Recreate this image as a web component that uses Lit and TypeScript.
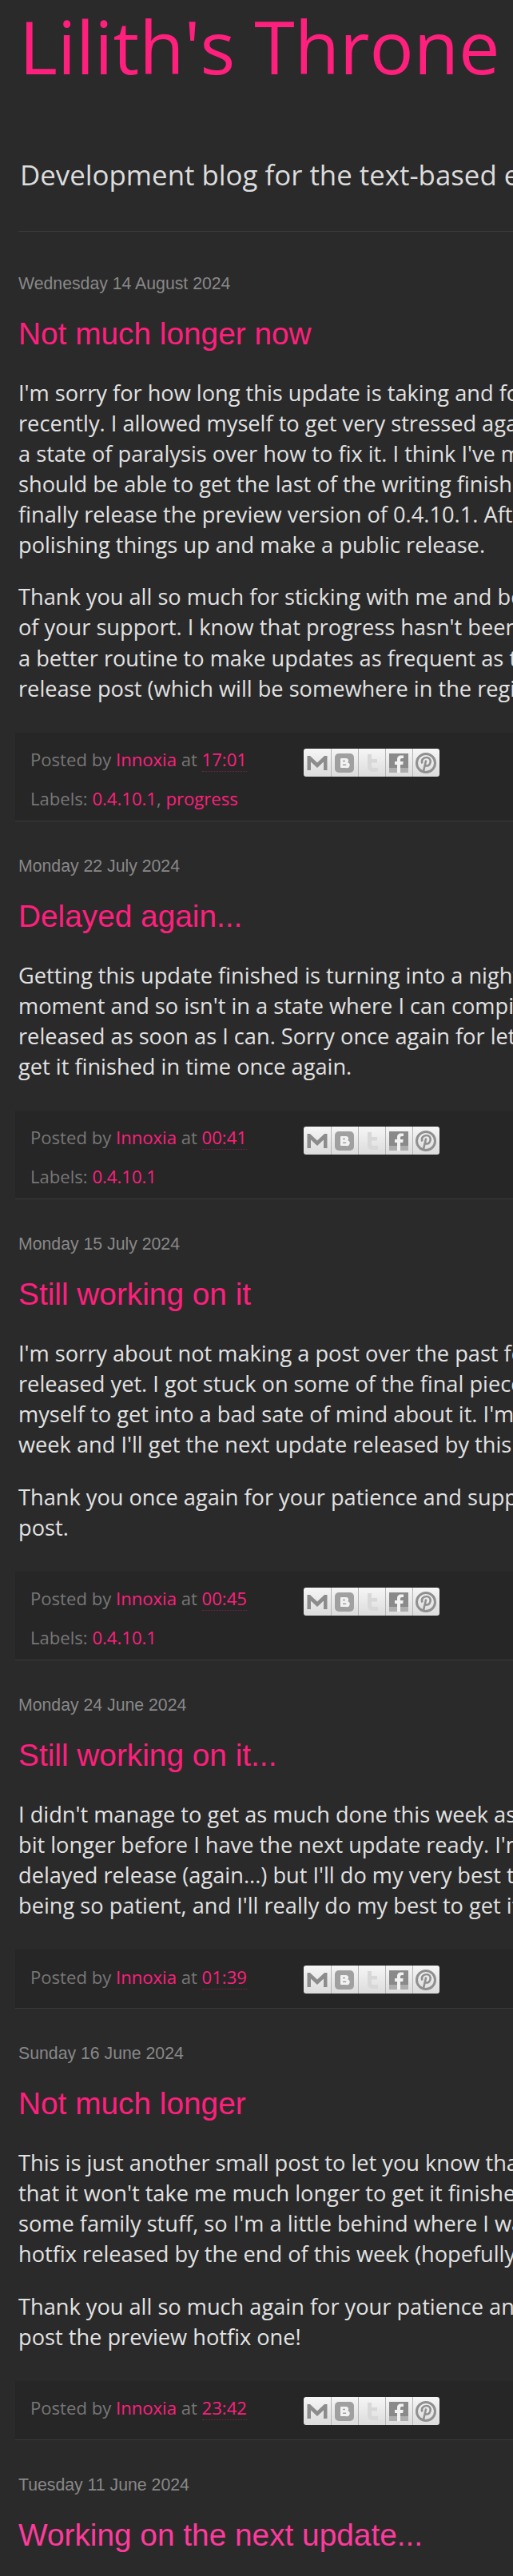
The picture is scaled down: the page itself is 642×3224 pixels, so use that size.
import { LitElement, html, css, svg } from "lit";
import { customElement } from "lit/decorators.js";

interface Post {
  date: string;
  title: string;
  paras: string[][];
  time: string;
  labels?: string[];
  hover?: boolean;
}

const POSTS: Post[] = [
  {
    date: "Wednesday 14 August 2024",
    title: "Not much longer now",
    paras: [
      [
        "I'm sorry for how long this update is taking and for the lack of posts",
        "recently. I allowed myself to get very stressed again",
        "a state of paralysis over how to fix it. I think I've managed",
        "should be able to get the last of the writing finished",
        "finally release the preview version of 0.4.10.1. After that",
        "polishing things up and make a public release.",
      ],
      [
        "Thank you all so much for sticking with me and being",
        "of your support. I know that progress hasn't been",
        "a better routine to make updates as frequent as they",
        "release post (which will be somewhere in the region",
      ],
    ],
    time: "17:01",
    labels: ["0.4.10.1", "progress"],
  },
  {
    date: "Monday 22 July 2024",
    title: "Delayed again...",
    paras: [
      [
        "Getting this update finished is turning into a nightmare",
        "moment and so isn't in a state where I can compile",
        "released as soon as I can. Sorry once again for letting",
        "get it finished in time once again.",
      ],
    ],
    time: "00:41",
    labels: ["0.4.10.1"],
  },
  {
    date: "Monday 15 July 2024",
    title: "Still working on it",
    paras: [
      [
        "I'm sorry about not making a post over the past few",
        "released yet. I got stuck on some of the final pieces",
        "myself to get into a bad sate of mind about it. I'm",
        "week and I'll get the next update released by this",
      ],
      ["Thank you once again for your patience and support", "post."],
    ],
    time: "00:45",
    labels: ["0.4.10.1"],
  },
  {
    date: "Monday 24 June 2024",
    title: "Still working on it...",
    paras: [
      [
        "I didn't manage to get as much done this week as",
        "bit longer before I have the next update ready. I'm",
        "delayed release (again...) but I'll do my very best to",
        "being so patient, and I'll really do my best to get it",
      ],
    ],
    time: "01:39",
  },
  {
    date: "Sunday 16 June 2024",
    title: "Not much longer",
    paras: [
      [
        "This is just another small post to let you know that",
        "that it won't take me much longer to get it finished",
        "some family stuff, so I'm a little behind where I wanted",
        "hotfix released by the end of this week (hopefully",
      ],
      ["Thank you all so much again for your patience and", "post the preview hotfix one!"],
    ],
    time: "23:42",
  },
  {
    date: "Tuesday 11 June 2024",
    title: "Working on the next update...",
    paras: [],
    time: "",
    hover: true,
  },
];

const ICONS = [
  svg`<path d="M4.500 27V9h3.500l9 8.500L26 9h3.500v18H25V16.500L17 24l-8-7.500V27z" fill="#8c8c8c"/>`,
  svg`<rect x="5" y="6" width="24" height="24" rx="5" fill="#a0a0a0"/><path d="M13 12h6a3 3 0 0 1 2.200 5.200A3.500 3.500 0 0 1 19 24h-6a1 1 0 0 1-1-1V13a1 1 0 0 1 1-1z" fill="#f2f2f2"/><path d="M15 14.700h3v1.600h-3zM15 19.500h4.200v1.600H15z" fill="#a0a0a0"/>`,
  svg`<path d="M12 7h5v6h7v4.500h-7v4a2.500 2.500 0 0 0 2.500 2.500H25v5h-7c-3.500 0-6-2.500-6-6z" fill="#d8d8d8"/>`,
  svg`<rect x="5" y="6" width="24" height="24" fill="#8a8a8a"/><rect x="5" y="24" width="24" height="6" fill="#adadad"/><path d="M19 30V20h3.200l.5-4H19v-2c0-1.200.5-2 2-2h2V8.500h-3c-3.500 0-5 2-5 5V16h-3v4h3v10z" fill="#f2f2f2"/>`,
  svg`<circle cx="17" cy="18" r="11.500" fill="none" stroke="#909090" stroke-width="3"/><path d="M14 28l3.200-13.500M12.500 18.500c-2-4.500 1.500-7.500 5-7.500s6 2.500 5 6.500-4.500 5-6.500 3" fill="none" stroke="#909090" stroke-width="2.600"/>`,
];

@customElement("app-root")
export class AppRoot extends LitElement {
  static styles = css`
    :host {
      display: block;
      height: 3224px;
      overflow: hidden;
      background: #2a2a2a;
      font-family: "Open Sans", sans-serif;
    }
    .page {
      width: 642px;
      overflow: hidden;
    }
    .blog-title {
      margin: 0;
      padding: 0 0 0 24px;
      font-size: 91.800px;
      font-weight: 400;
      line-height: 115px;
      color: #ff1f7d;
      white-space: nowrap;
    }
    .tagline {
      margin: 0;
      padding: 80.500px 0 47.500px 25px;
      font-size: 34.850px;
      line-height: 46px;
      color: #dcdcdc;
      white-space: nowrap;
    }
    .rule {
      margin: 0 0 8.600px 23px;
      height: 1px;
      background: #3c3c3c;
    }
    .post {
      padding-top: 41px;
    }
    .date {
      margin: 0 0 0 23px;
      font: 21.250px/30px "Liberation Sans", Arial, sans-serif;
      color: #888888;
      white-space: nowrap;
    }
    .title {
      margin: 23px 0 0 23px;
      font: 38.800px/50px "Liberation Sans", Arial, sans-serif;
      color: #ff1f7d;
      white-space: nowrap;
    }
    .title.hover {
      color: #ff3a9c;
    }
    .para {
      margin: 27.200px 0 0 23px;
      font-size: 27.200px;
      line-height: 38.080px;
      color: #e2e2e2;
      white-space: nowrap;
    }
    .para:first-of-type {
      margin-top: 30.100px;
    }
    .foot {
      margin: 36px 0 0 19px;
      padding: 18.400px 0 0 19px;
      background: #262626;
      border-bottom: 1px solid #3a3a3a;
      font-size: 22.100px;
      line-height: 30px;
      color: #777777;
      white-space: nowrap;
    }
    .foot.plain {
      padding-bottom: 19.600px;
    }
    .foot.labelled {
      padding-bottom: 12.600px;
    }
    .row {
      display: flex;
      align-items: flex-start;
      height: 49px;
    }
    .foot.plain .row {
      height: 35px;
    }
    .posted {
      width: 342px;
      flex: none;
    }
    .foot a,
    .title a {
      color: #ff1f7d;
      text-decoration: none;
    }
    .title.hover a {
      color: #ff3a9c;
    }
    .time {
      border-bottom: 1px dotted #7a1f4c;
    }
    .share {
      display: flex;
      margin-top: 1.600px;
      border-radius: 3px;
      overflow: hidden;
    }
    .share svg {
      display: block;
      width: 34px;
      height: 35px;
      background: linear-gradient(#f6f6f6, #dcdcdc);
      box-shadow: inset 1px 0 0 #b4b4b4;
    }
    .share svg:first-child {
      box-shadow: none;
    }
  `;

  private renderShare() {
    return html`<div class="share">
      ${ICONS.map(
        (icon) => html`<svg viewBox="0 0 34 35" aria-hidden="true">${icon}</svg>`
      )}
    </div>`;
  }

  private renderFoot(p: Post) {
    if (!p.time) return "";
    const labels = p.labels;
    return html`<div class="foot ${labels ? "labelled" : "plain"}">
      <div class="row">
        <div class="posted">
          Posted by <a href="#">Innoxia</a> at
          <a class="time" href="#">${p.time}</a>
        </div>
        ${this.renderShare()}
      </div>
      ${labels
        ? html`<div class="labels">
            Labels:
            ${labels.map(
              (l, i) => html`${i ? ", " : ""}<a href="#">${l}</a>`
            )}
          </div>`
        : ""}
    </div>`;
  }

  render() {
    return html`<div class="page">
      <h1 class="blog-title">Lilith's Throne</h1>
      <p class="tagline">Development blog for the text-based erotic game</p>
      <div class="rule"></div>
      ${POSTS.map(
        (p) => html`<article class="post">
          <h2 class="date">${p.date}</h2>
          <h3 class="title ${p.hover ? "hover" : ""}">
            <a href="#">${p.title}</a>
          </h3>
          ${p.paras.map(
            (lines) => html`<p class="para">
              ${lines.map((l) => html`${l}<br />`)}
            </p>`
          )}
          ${this.renderFoot(p)}
        </article>`
      )}
    </div>`;
  }
}
